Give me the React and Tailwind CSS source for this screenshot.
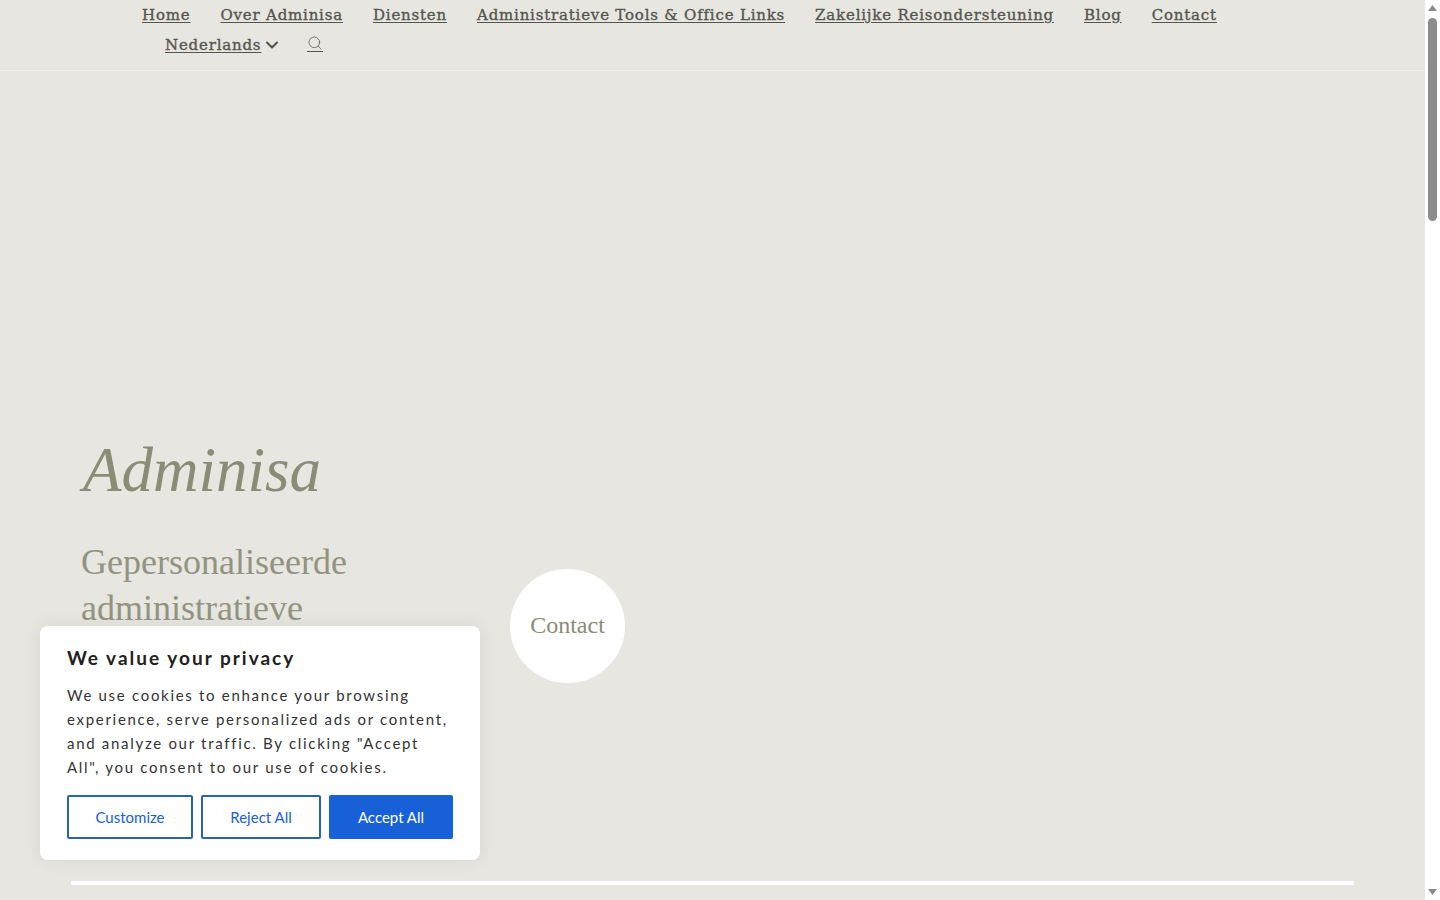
import { ChevronDown, Search } from 'lucide-react'

const NAV_LINKS = ['Home', 'Over Adminisa', 'Diensten', 'Administratieve Tools & Office Links', 'Zakelijke Reisondersteuning', 'Blog', 'Contact']

function NavLink({ children }) {
  return <a href="#" className="text-[15px] tracking-[0.8px] [-webkit-text-stroke:0.35px_#55554f] underline underline-offset-2 text-[#55554f] whitespace-nowrap">{children}</a>
}

function Header() {
  return (
    <header className="h-[71px] shrink-0 border-b border-[#f1f0ec] font-['DejaVu_Serif',serif]">
      <nav className="flex gap-[30px] pl-[142px] h-[30px] items-center">
        {NAV_LINKS.map((l) => <NavLink key={l}>{l}</NavLink>)}
      </nav>
      <div className="flex items-center pl-[165px] h-[30px]">
        <NavLink>Nederlands</NavLink>
        <ChevronDown className="ml-[1px] w-[20px] h-[20px] text-[#55554f]" strokeWidth={2.5} />
        <a href="#" className="ml-[25px] border-b border-[#55554f] w-[16px] h-[17px] flex items-start -mt-[3px]">
          <Search className="w-[16px] h-[16px] text-[#55554f]" strokeWidth={1.1} />
        </a>
      </div>
    </header>
  )
}

function Hero() {
  return (
    <section className="flex-1 min-h-0 flex flex-col font-['Liberation_Serif',serif] text-[#8b8c76]">
      <div className="flex items-start pl-[81px] pt-[367px] h-[810px] overflow-hidden">
        <div className="w-[429px]">
          <h1 className="text-[63px] leading-[64px] italic ml-[2px]">Adminisa</h1>
          <p className="mt-[37px] text-[36px] leading-[46px] text-[#929380]">Gepersonaliseerde administratieve</p>
        </div>
        <a href="#" className="mt-[131px] w-[115px] h-[114px] pb-[3px] rounded-full bg-white flex items-center justify-center text-[24px]">Contact</a>
      </div>
      <div className="h-[4px] bg-white ml-[71px] mr-[71px] shrink-0" />
    </section>
  )
}

function CookieBanner() {
  return (
    <div className="absolute left-[40px] top-[626px] w-[440px] h-[234px] bg-white rounded-[8px] shadow-[0_0_18px_rgba(0,0,0,0.08)] p-[27px] pt-[21px] font-['Lato',sans-serif]">
      <h2 className="text-[19px] leading-[22px] font-bold tracking-[2px] text-[#212121]">We value your privacy</h2>
      <p className="mt-[14px] text-[15px] leading-[24px] tracking-[1.7px] text-[#333333]">
        We use cookies to enhance your browsing experience, serve personalized ads or content, and analyze our traffic. By clicking "Accept All", you consent to our use of cookies.
      </p>
      <div className="flex gap-[8px] mt-[16px]">
        <button className="w-[126px] h-[44px] rounded-[2px] border-2 border-[#2a64b0] text-[15px] text-[#1860d8]">Customize</button>
        <button className="w-[120px] h-[44px] rounded-[2px] border-2 border-[#2a64b0] text-[15px] text-[#1860d8]">Reject All</button>
        <button className="w-[124px] h-[44px] rounded-[2px] bg-[#1860d8] text-[15px] text-white">Accept All</button>
      </div>
    </div>
  )
}

function Scrollbar() {
  return (
    <div className="w-[15px] shrink-0 bg-white flex flex-col items-center justify-between py-[5px]">
      <div className="flex flex-col items-center w-full">
        <svg width="9" height="6" viewBox="0 0 9 6"><path d="M4.5 0L9 6H0z" fill="#8a8a8a" /></svg>
        <div className="w-[9px] h-[203px] mt-[7px] rounded-full bg-[#8c8c8c]" />
      </div>
      <svg width="9" height="6" viewBox="0 0 9 6"><path d="M0 0H9L4.5 6z" fill="#8a8a8a" /></svg>
    </div>
  )
}

export default function App() {
  return (
    <div className="relative h-screen w-full flex overflow-hidden bg-white">
      <main className="flex-1 min-w-0 flex flex-col bg-[#e7e6e1]">
        <Header />
        <Hero />
      </main>
      <Scrollbar />
      <CookieBanner />
    </div>
  )
}
